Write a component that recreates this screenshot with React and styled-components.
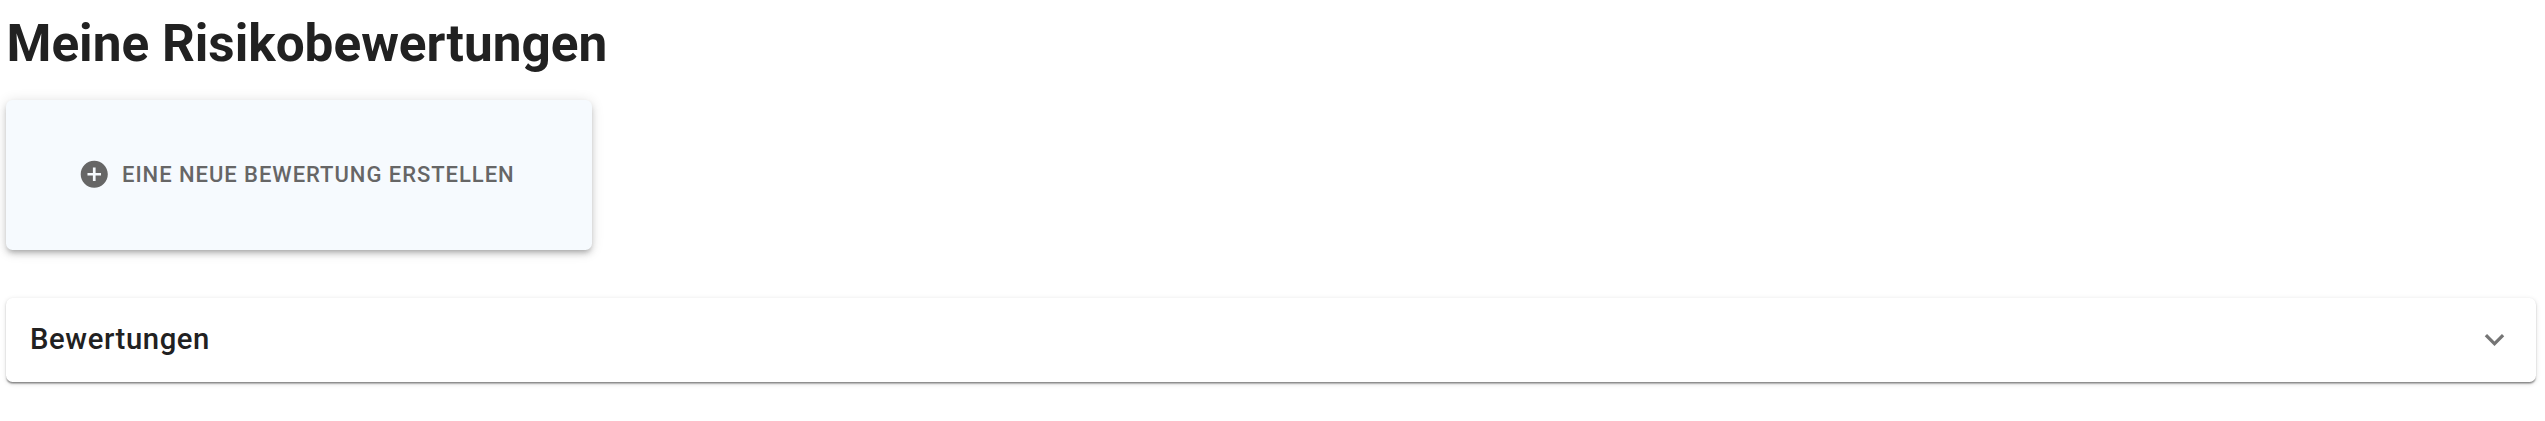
import React from 'react';
import styled, { createGlobalStyle } from 'styled-components';

const GlobalStyle = createGlobalStyle`
  html, body {
    margin: 0;
    padding: 0;
    background: #fff;
    font-family: Roboto, "Liberation Sans", sans-serif;
  }
`;

const Page = styled.div`
  box-sizing: border-box;
  width: 2545px;
  height: 421px;
  padding: 0 9px 0 6px;
  overflow: hidden;
`;

const Title = styled.h1`
  margin: 0 0 0 0.5px;
  height: 100px;
  padding-top: 14px;
  box-sizing: border-box;
  font-size: 51.3px;
  line-height: 60px;
  font-weight: 700;
  color: #212121;
`;

const CreateCard = styled.button`
  display: flex;
  align-items: center;
  gap: 12px;
  box-sizing: border-box;
  width: 585.5px;
  height: 149.5px;
  padding: 0 0 1px 71.5px;
  border: 0;
  border-radius: 6.5px;
  background: #f6fafe;
  color: #666;
  box-shadow: 0 4px 5px -3px rgba(0, 0, 0, 0.2), 0 4px 6.5px 0 rgba(0, 0, 0, 0.14), 0 1.6px 13px 0 rgba(0, 0, 0, 0.12);
  font-family: inherit;
  font-size: 22px;
  font-weight: 500;
  letter-spacing: 0.96px;
  text-transform: uppercase;
`;

const Icon = styled.svg`
  display: block;
  flex: none;
  width: ${(p) => p.$size}px;
  height: ${(p) => p.$size}px;
  fill: currentColor;
`;

const Panel = styled.div`
  display: flex;
  align-items: center;
  justify-content: space-between;
  box-sizing: border-box;
  height: 84px;
  margin-top: 48px;
  padding: 0 22px 1px 24px;
  border-radius: 6.5px;
  background: #fff;
  box-shadow: 0 2px 1.6px -1.6px rgba(0, 0, 0, 0.3), 0 1.2px 1.6px 0 rgba(0, 0, 0, 0.2), 0 1.6px 4.9px 0 rgba(0, 0, 0, 0.12);
`;

const PanelTitle = styled.span`
  font-size: 29.25px;
  font-weight: 500;
  letter-spacing: 0.6px;
  color: #212121;
`;

const Chevron = styled(Icon)`
  color: #757575;
`;

export default function App() {
  return (
    <Page>
      <GlobalStyle />
      <Title>Meine Risikobewertungen</Title>
      <CreateCard>
        <Icon $size={32.5} viewBox="0 0 24 24">
          <path d="M12 2C6.48 2 2 6.48 2 12s4.48 10 10 10 10-4.48 10-10S17.52 2 12 2zm5 11h-4v4h-2v-4H7v-2h4V7h2v4h4v2z" />
        </Icon>
        Eine neue Bewertung erstellen
      </CreateCard>
      <Panel>
        <PanelTitle>Bewertungen</PanelTitle>
        <Chevron $size={39} viewBox="0 0 24 24">
          <path d="M16.59 8.59 12 13.17 7.41 8.59 6 10l6 6 6-6z" />
        </Chevron>
      </Panel>
    </Page>
  );
}
